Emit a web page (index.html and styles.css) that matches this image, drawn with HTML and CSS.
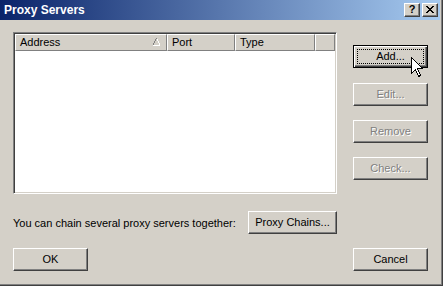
FILE: index.html
```html
<!DOCTYPE html>
<html>
<head>
<meta charset="utf-8">
<link rel="stylesheet" href="styles.css">
</head>
<body>
<div class="window">
  <div class="titlebar">
    <span class="title">Proxy Servers</span>
    <div class="tbuttons">
      <div class="tbtn help">?</div>
      <div class="tbtn close">
        <svg width="8" height="7" viewBox="0 0 8 7" shape-rendering="crispEdges">
          <path d="M0 0h2v1h-2z M6 0h2v1h-2z M1 1h2v1h-2z M5 1h2v1h-2z M2 2h4v1h-4z M3 3h2v1h-2z M2 4h4v1h-4z M1 5h2v1h-2z M5 5h2v1h-2z M0 6h2v1h-2z M6 6h2v1h-2z" fill="#000"/>
        </svg>
      </div>
    </div>
  </div>
  <div class="content">
    <div class="main">
      <div class="list">
        <div class="header">
          <div class="col c-addr">Address
            <svg class="sort" width="8" height="8" viewBox="0 0 8 8" shape-rendering="crispEdges">
              <path d="M3 0h1v1h-1z M2 1h1v2h-1z M1 3h1v2h-1z M0 5h1v2h-1z" fill="#808080"/>
              <path d="M4 1h1v2h-1z M5 3h1v2h-1z M6 5h1v2h-1z M0 7h7v1h-7z" fill="#fff"/>
            </svg>
          </div>
          <div class="col c-port">Port</div>
          <div class="col c-type">Type</div>
          <div class="col c-fill"></div>
        </div>
        <div class="rows"></div>
      </div>
      <div class="side">
        <button class="btn default">Add...</button>
        <button class="btn disabled gap15">Edit...</button>
        <button class="btn disabled gap14">Remove</button>
        <button class="btn disabled gap14">Check...</button>
      </div>
    </div>
    <div class="chainrow">
      <span class="label">You can chain several proxy servers together:</span>
      <button class="btn chains">Proxy Chains...</button>
    </div>
    <div class="bottomrow">
      <button class="btn">OK</button>
      <button class="btn">Cancel</button>
    </div>
  </div>
  <svg class="cursor" width="13" height="21" viewBox="0 0 13 21" shape-rendering="crispEdges">
    <path d="M0.5 0.5 L0.5 16.5 L4.5 12.5 L7.5 19.5 L9.5 18.5 L6.5 11.5 L11.5 11.5 Z" fill="#fff" stroke="#000" stroke-width="1"/>
  </svg>
</div>
</body>
</html>
```

FILE: styles.css
```css
* { box-sizing: border-box; }
html, body { margin: 0; padding: 0; }
body {
  background: #d4d0c8;
  font-family: "Liberation Sans", Arial, sans-serif;
  font-size: 11px;
  color: #000;
}
.window {
  position: relative;
  width: 443px;
  height: 286px;
  background: #d4d0c8;
  border-right: 1px solid #404040;
  border-bottom: 1px solid #404040;
  box-shadow: inset -1px -1px #808080;
  padding: 0 2px 2px 0;
  display: flex;
  flex-direction: column;
}
.titlebar {
  height: 20px;
  flex: none;
  background: linear-gradient(to right, #0a246a, #a6caf0);
  display: flex;
  align-items: center;
  justify-content: space-between;
  padding: 0 2px 0 4px;
}
.title {
  color: #fff;
  font-weight: bold;
  font-size: 12px;
}
.tbuttons {
  display: flex;
  gap: 2px;
}
.tbtn {
  width: 16px;
  height: 14px;
  background: #d4d0c8;
  border: 1px solid;
  border-color: #fff #404040 #404040 #fff;
  box-shadow: inset -1px -1px #808080;
  display: flex;
  align-items: center;
  justify-content: center;
}
.help {
  font-weight: bold;
  font-size: 11px;
  line-height: 1;
  padding-bottom: 1px;
}
.close svg { display: block; margin-bottom: 1px; }
.content {
  flex: 1;
  padding: 12px 0 0 13px;
  display: flex;
  flex-direction: column;
}
.main {
  display: flex;
  align-items: flex-start;
}
.list {
  width: 324px;
  height: 162px;
  border: 1px solid;
  border-color: #808080 #fff #fff #808080;
  box-shadow: inset 1px 1px #404040, inset -1px -1px #d4d0c8;
  padding: 1px;
  display: flex;
  flex-direction: column;
}
.header {
  display: flex;
  height: 17px;
  flex: none;
}
.col {
  position: relative;
  height: 17px;
  border: 1px solid;
  border-color: #fff #808080 #808080 #fff;
  padding-left: 4px;
  line-height: 15px;
  white-space: nowrap;
}
.c-addr { width: 152px; }
.c-port { width: 68px; }
.c-type { width: 80px; }
.c-fill { width: 20px; }
.sort {
  position: absolute;
  left: 137px;
  top: 3px;
}
.rows {
  flex: 1;
  background: #fff;
}
.btn {
  width: 75px;
  height: 23px;
  background: #d4d0c8;
  font-family: "Liberation Sans", Arial, sans-serif;
  font-size: 11px;
  color: #000;
  border: 1px solid;
  border-color: #fff #404040 #404040 #fff;
  box-shadow: inset -1px -1px #808080;
  padding: 0;
  margin: 0;
  text-align: center;
  line-height: 19px;
}
.btn.default {
  border-color: #000;
  box-shadow: inset 1px 1px #fff, inset -1px -1px #404040, inset -2px -2px #808080;
  outline: 1px dotted #000;
  outline-offset: -5px;
}
.btn.disabled {
  color: #808080;
  text-shadow: 1px 1px #fff;
}
.side {
  margin-left: 16px;
  margin-top: 13px;
  display: flex;
  flex-direction: column;
}
.side .gap15 { margin-top: 15px; }
.side .gap14 { margin-top: 14px; }
.chainrow {
  margin-top: 17px;
  width: 324px;
  display: flex;
  align-items: center;
  justify-content: space-between;
}
.btn.chains {
  width: 89px;
}
.bottomrow {
  margin-top: 14px;
  display: flex;
  justify-content: space-between;
  width: 415px;
}
.cursor {
  position: absolute;
  left: 411px;
  top: 57px;
}
```
